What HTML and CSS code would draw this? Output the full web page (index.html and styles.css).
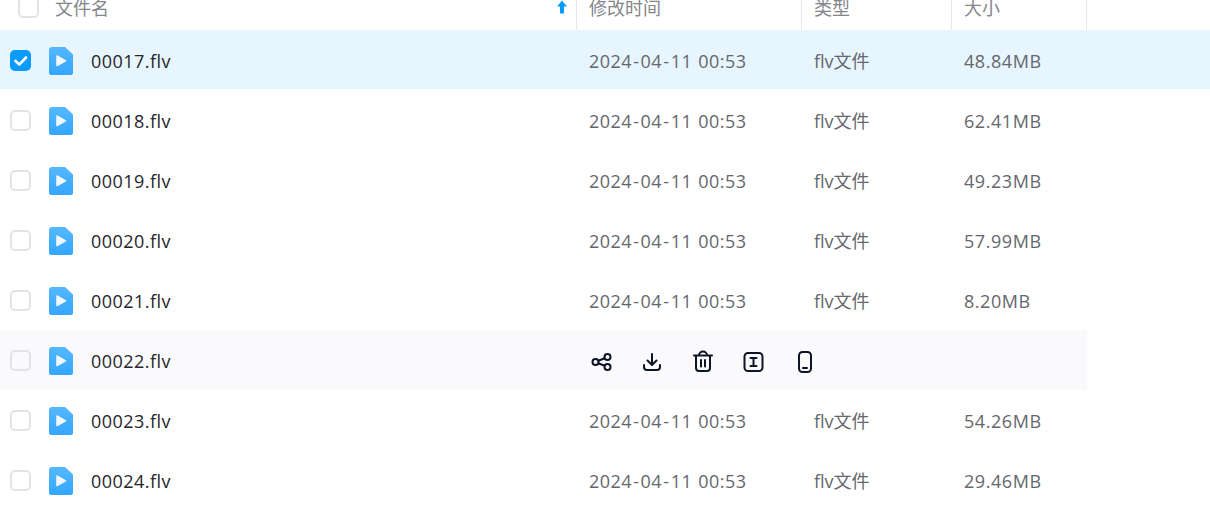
FILE: index.html
```
<!DOCTYPE html>
<html lang="zh">
<head>
<meta charset="utf-8">
<title>文件列表</title>
<link rel="stylesheet" href="styles.css">
</head>
<body>
<svg class="defs" width="0" height="0" aria-hidden="true">
  <symbol id="file" viewBox="0 0 24 28">
    <path d="M3 0H16L24 7.500V25.500A2.500 2.500 0 0 1 21.500 28H2.500A2.500 2.500 0 0 1 0 25.500V3A3 3 0 0 1 3 0Z" fill="url(#fg)"/>
    <path d="M8 9V18.500L16.500 13.800Z" fill="#f1f9ff" stroke="#f1f9ff" stroke-width="1.500" stroke-linejoin="round"/>
  </symbol>
  <linearGradient id="fg" x1="0" y1="0" x2="0" y2="1">
    <stop offset="0" stop-color="#55b8ff"/>
    <stop offset="1" stop-color="#33a6ff"/>
  </linearGradient>
</svg>
<main class="table">
  <div class="head">
    <div class="cell name-col">
      <span class="check head-check"></span>
      <span class="title">文件名</span>
      <svg class="sort" viewBox="0 0 10 14"><path d="M5 .5 10 6.500H7V13.500H3V6.500H0Z" fill="#0a9bff"/></svg>
    </div>
    <div class="cell">修改时间</div>
    <div class="cell">类型</div>
    <div class="cell">大小</div>
  </div>

  <div class="row selected">
    <div class="name-col"><span class="check on"><svg viewBox="0 0 21 21"><path d="M5.500 11 9.300 14.500 16 7.500" fill="none" stroke="#fff" stroke-width="2.600" stroke-linecap="round" stroke-linejoin="round"/></svg></span><svg class="file"><use href="#file"/></svg><span class="fname">00017.flv</span></div>
    <div class="data date">2024<span class="dash">-</span>04<span class="dash">-</span>11 00:53</div><div class="data">flv文件</div><div class="data size">48.84MB</div>
  </div>
  <div class="row">
    <div class="name-col"><span class="check"></span><svg class="file"><use href="#file"/></svg><span class="fname">00018.flv</span></div>
    <div class="data date">2024<span class="dash">-</span>04<span class="dash">-</span>11 00:53</div><div class="data">flv文件</div><div class="data size">62.41MB</div>
  </div>
  <div class="row">
    <div class="name-col"><span class="check"></span><svg class="file"><use href="#file"/></svg><span class="fname">00019.flv</span></div>
    <div class="data date">2024<span class="dash">-</span>04<span class="dash">-</span>11 00:53</div><div class="data">flv文件</div><div class="data size">49.23MB</div>
  </div>
  <div class="row">
    <div class="name-col"><span class="check"></span><svg class="file"><use href="#file"/></svg><span class="fname">00020.flv</span></div>
    <div class="data date">2024<span class="dash">-</span>04<span class="dash">-</span>11 00:53</div><div class="data">flv文件</div><div class="data size">57.99MB</div>
  </div>
  <div class="row">
    <div class="name-col"><span class="check"></span><svg class="file"><use href="#file"/></svg><span class="fname">00021.flv</span></div>
    <div class="data date">2024<span class="dash">-</span>04<span class="dash">-</span>11 00:53</div><div class="data">flv文件</div><div class="data size">8.20MB</div>
  </div>
  <div class="row hovered">
    <div class="name-col"><span class="check"></span><svg class="file"><use href="#file"/></svg><span class="fname">00022.flv</span></div>
    <div class="actions">
      <svg class="act" viewBox="0 0 24 24"><g fill="none" stroke="#0d1426" stroke-width="2"><circle cx="6.500" cy="12" r="3"/><circle cx="18.500" cy="7" r="3"/><circle cx="18.500" cy="17" r="3"/><path d="M9.300 10.800 15.700 8.200M9.300 13.200 15.700 15.800"/></g></svg>
      <svg class="act" viewBox="0 0 24 24"><g fill="none" stroke="#0d1426" stroke-width="2" stroke-linecap="round" stroke-linejoin="round"><path d="M12 4V14.500M7.500 10.500 12 15 16.500 10.500"/><path d="M4 15V17A3 3 0 0 0 7 20H17A3 3 0 0 0 20 17V15"/></g></svg>
      <svg class="act" viewBox="0 0 24 24"><g fill="none" stroke="#0d1426" stroke-width="2" stroke-linecap="round" stroke-linejoin="round"><path d="M5 6V18A3 3 0 0 0 8 21H16A3 3 0 0 0 19 18V6"/><path d="M3 5.500H21M8 5.500A4 4 0 0 1 16 5.500M10 10V16.500M14 10V16.500"/></g></svg>
      <svg class="act" viewBox="0 0 24 24"><g fill="none" stroke="#0d1426" stroke-width="2" stroke-linecap="round"><rect x="2.500" y="3" width="18" height="18" rx="3.500"/><path d="M8.500 8H14.500M8.500 16H14.500M11.500 8V16"/></g></svg>
      <svg class="act" viewBox="0 0 24 24"><g fill="none" stroke="#0d1426" stroke-width="2" stroke-linecap="round"><rect x="6" y="2" width="12" height="20" rx="3.500"/><path d="M10 18H14"/></g></svg>
    </div>
  </div>
  <div class="row">
    <div class="name-col"><span class="check"></span><svg class="file"><use href="#file"/></svg><span class="fname">00023.flv</span></div>
    <div class="data date">2024<span class="dash">-</span>04<span class="dash">-</span>11 00:53</div><div class="data">flv文件</div><div class="data size">54.26MB</div>
  </div>
  <div class="row">
    <div class="name-col"><span class="check"></span><svg class="file"><use href="#file"/></svg><span class="fname">00024.flv</span></div>
    <div class="data date">2024<span class="dash">-</span>04<span class="dash">-</span>11 00:53</div><div class="data">flv文件</div><div class="data size">29.46MB</div>
  </div>
</main>
</body>
</html>
```
FILE: styles.css
```
* { box-sizing: border-box; }
html, body { margin: 0; height: 515px; overflow: hidden; background: #fff; }
body { font-family: "Open Sans", "Noto Sans CJK SC", sans-serif; font-size: 18px; color: #25262b; }
.defs { display: block; height: 0; }
.table { margin-top: -16px; }
.head {
  display: grid;
  grid-template-columns: 577px 225px 150px 135px;
  height: 47px;
  border-bottom: 1px solid #f2f2f4;
  color: #84868c;
}
.head .cell {
  display: flex;
  align-items: center;
  height: 46px;
  padding-left: 12px;
  border-right: 1px solid #e9e9ea;
}
.head .name-col { padding-left: 18px; }
.head-check { width: 20px; height: 20px; }
.title { margin-left: 16px; }
.sort { width: 12px; height: 14px; margin-left: auto; margin-right: 8px; }
.check {
  display: block;
  flex: none;
  width: 21px;
  height: 21px;
  border: 2px solid #e3e3e5;
  border-radius: 5px;
}
.check.on { background: #0a9bff; border: 0; }
.check.on svg { display: block; width: 21px; height: 21px; }
.row {
  display: grid;
  grid-template-columns: 577px 225px 150px 135px;
  align-items: center;
  height: 58px;
  margin-bottom: 2px;
}
.selected { background: #e7f5fe; }
.hovered { background: #fafafc; width: 1087px; }
.name-col { display: flex; align-items: center; }
.row .name-col { padding-left: 10px; }
.file { flex: none; width: 24px; height: 28px; margin-left: 18px; margin-top: 2px; }
.fname { margin-left: 18px; margin-top: 2px; letter-spacing: .45px; }
.data { padding-left: 12px; color: #65676d; }
.date, .size { margin-top: 2px; letter-spacing: .45px; }
.size { letter-spacing: .55px; }
.date { word-spacing: 1px; }
.dash { margin: 0 1.200px; }
.actions {
  grid-column: 2 / 5;
  display: flex;
  align-items: center;
  gap: 27px;
  padding-left: 12px;
  margin-top: 4px;
}
.act { width: 24px; height: 24px; flex: none; }
```
